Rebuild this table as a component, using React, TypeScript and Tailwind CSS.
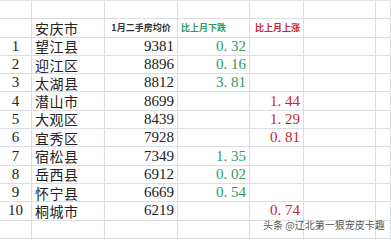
import React from 'react';

type Row = { no: number; name: string; price: number; down?: string; up?: string };

const rows: Row[] = [
  { no: 1, name: '望江县', price: 9381, down: '0. 32' },
  { no: 2, name: '迎江区', price: 8896, down: '0. 16' },
  { no: 3, name: '太湖县', price: 8812, down: '3. 81' },
  { no: 4, name: '潜山市', price: 8699, up: '1. 44' },
  { no: 5, name: '大观区', price: 8439, up: '1. 29' },
  { no: 6, name: '宜秀区', price: 7928, up: '0. 81' },
  { no: 7, name: '宿松县', price: 7349, down: '1. 35' },
  { no: 8, name: '岳西县', price: 6912, down: '0. 02' },
  { no: 9, name: '怀宁县', price: 6669, down: '0. 54' },
  { no: 10, name: '桐城市', price: 6219, up: '0. 74' },
];

const serif = "font-['Liberation_Serif','Noto_Sans_CJK_SC',serif]";
const cjk = "font-['Noto_Sans_CJK_SC',sans-serif]";

const cell =
  'h-[18.3px] border-r border-b border-[#dcdce4] flex items-center overflow-visible whitespace-pre leading-none';

const Blank: React.FC = () => (
  <>
    <div className={cell} />
    <div className={cell} />
    <div className={cell} />
    <div className={cell} />
    <div className={cell} />
    <div className={cell} />
    <div className={cell} />
  </>
);

export default function App() {
  return (
    <div className="relative w-[391px] h-[240px] bg-white overflow-hidden border-t border-[#e4e4ea]">
      <div className="grid grid-cols-[32px_73px_73px_72px_54px_72px_1fr]">
        <Blank />

        {/* 表头 */}
        <div className={cell} />
        <div className={`${cell} pl-[3px] ${cjk} text-[14px] tracking-[0.5px] text-[#222]`}>安庆市</div>
        <div className={`${cell} justify-center ${cjk} text-[9px] font-bold text-[#333]`}>1月二手房均价</div>
        <div className={`${cell} justify-start pl-[3px] ${cjk} text-[9px] font-bold text-[#2f9a63]`}>比上月下跌</div>
        <div className={`${cell} justify-start pl-[5px] ${cjk} text-[9px] font-bold text-[#c8262f]`}>比上月上涨</div>
        <div className={cell} />
        <div className={cell} />

        {rows.map((r) => (
          <React.Fragment key={r.no}>
            <div className={`${cell} justify-center ${serif} text-[15px] text-[#222]`}>{r.no}</div>
            <div className={`${cell} pl-[3px] ${cjk} text-[14px] tracking-[0.5px] text-[#222]`}>{r.name}</div>
            <div className={`${cell} justify-end pr-[3px] ${serif} text-[15px] text-[#222]`}>{r.price}</div>
            <div className={`${cell} justify-end pr-[3px] ${serif} text-[15px] text-[#2f9a63]`}>{r.down ?? ''}</div>
            <div className={`${cell} justify-end pr-[3px] ${serif} text-[15px] text-[#c8262f]`}>{r.up ?? ''}</div>
            <div className={cell} />
            <div className={cell} />
          </React.Fragment>
        ))}

        <Blank />
        <Blank />
      </div>

      {/* 水印 */}
      <div
        className={`absolute left-[263px] top-[219px] ${cjk} text-[10px] leading-none text-[#555] [text-shadow:0_0_1px_#fff,0_0_2px_#fff]`}
      >
        头条 @辽北第一狠宠皮卡趣
      </div>
    </div>
  );
}
